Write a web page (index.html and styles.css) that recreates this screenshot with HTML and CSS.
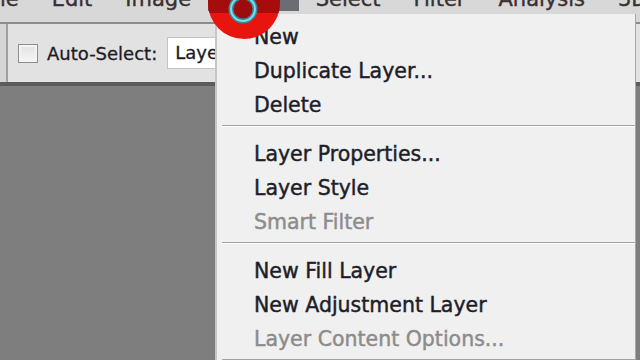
FILE: index.html
```html
<!DOCTYPE html>
<html lang="en">
<head>
  <meta charset="UTF-8">
  <title>Layer menu</title>
  <link rel="stylesheet" href="styles.css">
</head>
<body>
<div class="app">
  <div class="menubar">
    <div class="menubar-items">
      <span>File</span>
      <span>Edit</span>
      <span>Image</span>
      <span class="active">Layer</span>
      <span>Select</span>
      <span>Filter</span>
      <span>Analysis</span>
      <span>3D</span>
    </div>
  </div>
  <div class="options">
    <div class="options-inner">
      <span class="check"></span>
      <span class="label">Auto-Select:</span>
      <span class="select">Layer</span>
    </div>
  </div>
  <div class="canvas"></div>

  <div class="dropdown">
    <div class="item">New</div>
    <div class="item">Duplicate Layer...</div>
    <div class="item">Delete</div>
    <div class="sep"></div>
    <div class="item">Layer Properties...</div>
    <div class="item">Layer Style</div>
    <div class="item disabled">Smart Filter</div>
    <div class="sep"></div>
    <div class="item">New Fill Layer</div>
    <div class="item">New Adjustment Layer</div>
    <div class="item disabled">Layer Content Options...</div>
    <div class="sep"></div>
  </div>

  <!-- click marker from the screen recorder -->
  <svg class="click-mark" width="100" height="50" viewBox="0 0 100 50">
    <defs>
      <clipPath id="dot">
        <circle cx="44" cy="3" r="36"/>
      </clipPath>
    </defs>
    <circle cx="44" cy="3" r="36" fill="#e8140e"/>
    <rect x="7" y="0" width="93" height="13" fill="#a50c0c" clip-path="url(#dot)"/>
    <circle cx="43" cy="9" r="12" fill="#9c0c0c" stroke="#2f8e9c" stroke-width="5"/>
    <circle cx="43" cy="9" r="12" fill="none" stroke="#7fdcea" stroke-width="2"/>
  </svg>
</div>
</body>
</html>
```

FILE: styles.css
```css
html, body {
  margin: 0;
  background: #7e7e7e;
  font-family: "DejaVu Sans", Verdana, sans-serif;
}
.app {
  position: relative;
  width: 640px;
  height: 360px;
  overflow: hidden;
  display: flex;
  flex-direction: column;
}

/* top menu bar, cut off at the top edge */
.menubar {
  height: 22px;
  background: #d8d8d8;
  border-bottom: 2px solid #8c8c8c;
  overflow: hidden;
  flex: none;
}
.menubar-items {
  display: flex;
  margin-top: -13px;
  margin-left: -33px;
  font-size: 21px;
  line-height: 24px;
  color: #3a3032;
  -webkit-text-stroke: 0.4px #3a3032;
  white-space: nowrap;
}
.menubar-items span {
  padding: 0 16.5px;
}
.menubar-items .active {
  background: #6c6c74;
}

/* options bar */
.options {
  height: 58px;
  background: #d6d6d6;
  padding-left: 6px;
  border-bottom: 4px solid #5c5c5c;
  flex: none;
  display: flex;
}
.options-inner {
  flex: 1;
  display: flex;
  align-items: center;
  padding-left: 10px;
  background: #e2e2e2;
  border-left: 2px solid #a0a0a0;
}
.check {
  width: 18px;
  height: 17px;
  border: 1px solid #8e8e8e;
  background: linear-gradient(#e2e2e2, #f6f6f6);
  box-shadow: inset 0 0 0 2px #f4f4f4;
}
.label {
  margin-left: 9px;
  font-size: 18px;
  color: #1c1c24;
  -webkit-text-stroke: 0.3px #1c1c24;
}
.select {
  margin-left: 10px;
  width: 80px;
  height: 30px;
  line-height: 30px;
  padding-left: 7px;
  background: #fff;
  border: 1px solid #c4c4c4;
  font-size: 18px;
  color: #1c1c24;
  -webkit-text-stroke: 0.3px #1c1c24;
}

.canvas {
  flex: 1;
  background: #7e7e7e;
}

/* the open Layer menu */
.dropdown {
  position: absolute;
  left: 215px;
  top: 14px;
  width: 418px;
  height: 360px;
  padding-top: 6px;
  background: #f0f0f0;
  border-left: 2px solid #c6c6c6;
  border-right: 1px solid #a8a8a8;
  font-size: 20.5px;
  color: #1e1e2a;
}
.item {
  height: 34px;
  line-height: 34px;
  padding-left: 37px;
  white-space: nowrap;
  -webkit-text-stroke: 0.45px #1e1e2a;
}
.item.disabled {
  color: #8c8c8c;
  -webkit-text-stroke: 0.45px #8c8c8c;
}
.sep {
  margin: 3px 0 10px 5px;
  border-top: 1px solid #a4a4a4;
  border-bottom: 1px solid #fff;
}

.click-mark {
  position: absolute;
  left: 200px;
  top: 0;
}
```
